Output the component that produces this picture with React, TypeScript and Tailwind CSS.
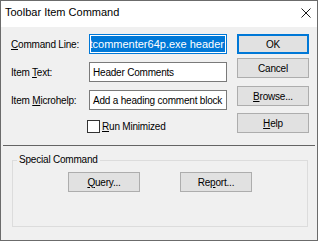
import type { ReactNode } from "react";

function Btn({ children, primary, className = "" }: { children: ReactNode; primary?: boolean; className?: string }) {
  return (
    <div
      className={`flex h-[20px] w-[72px] items-center justify-center bg-[#e1e1e1] text-[10px] leading-[13px] tracking-[-0.2px] text-black ${
        primary ? "border-2 border-[#0078d7]" : "border border-[#adadad]"
      } ${className}`}
    >
      {children}
    </div>
  );
}

function U({ children }: { children: ReactNode }) {
  return <span className="underline decoration-1 underline-offset-[1px]">{children}</span>;
}

function Row({ label, children }: { label: ReactNode; children: ReactNode }) {
  return (
    <div className="flex h-[20px] items-center">
      <div className="w-[78px] text-[10px] leading-[13px] tracking-[-0.2px] text-black">{label}</div>
      {children}
    </div>
  );
}

export default function App() {
  return (
    <div className="h-[241px] w-[320px] bg-white font-['Liberation_Sans',Arial,sans-serif]">
      <div className="flex h-[241px] w-[318px] flex-col border border-[#6b6b6b]">
        {/* title bar */}
        <div className="flex h-[26px] items-start bg-white">
          <div className="pl-[4px] pt-[4px] text-[11px] leading-[14px] text-black">Toolbar Item Command</div>
          <svg className="ml-auto mr-[6px] mt-[7px]" width="10" height="10" viewBox="0 0 10 10">
            <path d="M0.5 0.5 L9.5 9.5 M9.5 0.5 L0.5 9.5" stroke="#1a1a1a" strokeWidth="1" fill="none" />
          </svg>
        </div>

        <div className="flex flex-1 flex-col bg-[#f0f0f0]">
          <div className="flex h-[118px]">
            <div className="flex flex-col gap-[8px] pl-[10px] pt-[7px]">
              <Row
                label={
                  <>
                    <U>C</U>ommand Line:
                  </>
                }
              >
                <div className="flex h-[20px] w-[138px] justify-end overflow-hidden border border-[#0078d7] bg-white p-[1px]">
                  <div className="flex w-[134px] shrink-0 justify-end overflow-hidden bg-[#0078d7] text-[11px] leading-[16px] whitespace-nowrap text-white">
                    <span className="pr-[1px]">ptcommenter64p.exe header</span>
                  </div>
                </div>
              </Row>
              <Row
                label={
                  <>
                    Item <U>T</U>ext:
                  </>
                }
              >
                <div className="flex h-[20px] w-[138px] items-center overflow-hidden border border-[#7a7a7a] bg-white pl-[3px] text-[10px] leading-[13px] tracking-[-0.2px] whitespace-nowrap text-black">
                  Header Comments
                </div>
              </Row>
              <Row
                label={
                  <>
                    Item <U>M</U>icrohelp:
                  </>
                }
              >
                <div className="flex h-[20px] w-[138px] items-center overflow-hidden border border-[#7a7a7a] bg-white pl-[3px] text-[10px] leading-[13px] tracking-[-0.2px] whitespace-nowrap text-black">
                  Add a heading comment block
                </div>
              </Row>
              <div className="mt-[2px] flex items-center pl-[76px]">
                <div className="h-[13px] w-[13px] border border-[#333333] bg-white" />
                <span className="ml-[2px] text-[10px] leading-[13px] tracking-[-0.2px] text-black">
                  <U>R</U>un Minimized
                </span>
              </div>
            </div>

            <div className="ml-auto mr-[8px] flex flex-col pt-[7px]">
              <Btn primary>OK</Btn>
              <Btn className="mt-[4px]">Cancel</Btn>
              <Btn className="mt-[8px]">
                <span>
                  <U>B</U>rowse...
                </span>
              </Btn>
              <Btn className="mt-[7px]">
                <span>
                  <U>H</U>elp
                </span>
              </Btn>
            </div>
          </div>

          <div className="mx-[2px] h-[1px] bg-[#646464]" />

          <fieldset className="ml-[11px] mt-[7px] h-[74px] w-[296px] border border-[#dcdcdc]">
            <legend className="ml-[4px] px-[2px] text-[10px] leading-[14px] tracking-[-0.2px] text-black">
              Special Command
            </legend>
            <div className="ml-[55px] mt-[5px] flex gap-[40px]">
              <Btn>
                <span>
                  <U>Q</U>uery...
                </span>
              </Btn>
              <Btn>
                <span>
                  Re<U>p</U>ort...
                </span>
              </Btn>
            </div>
          </fieldset>
        </div>
      </div>
    </div>
  );
}
